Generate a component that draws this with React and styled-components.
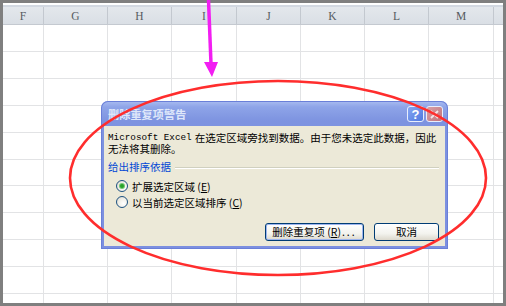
import React from "react";
import styled, { createGlobalStyle } from "styled-components";

const Global = createGlobalStyle`
  html, body { margin: 0; padding: 0; }
  body { width: 506px; height: 306px; overflow: hidden; background: #7f7f7f; font-family: "Noto Sans CJK SC", sans-serif; }
`;

const Frame = styled.div`
  position: relative;
  width: 506px;
  height: 306px;
  box-sizing: border-box;
  padding: 3px;
  background: #7f7f7f;
`;

const Sheet = styled.div`
  width: 500px;
  height: 300px;
  background: #ffffff;
  overflow: hidden;
  display: flex;
  flex-direction: column;
`;

const TopStrip = styled.div`
  height: 2px;
  background: #ffffff;
  border-bottom: 2px solid #d2d8e1;
  flex: none;
`;

const HeaderRow = styled.div`
  display: flex;
  height: 17px;
  flex: none;
  background: linear-gradient(#e3e7ec, #dadfe5);
  border-bottom: 1px solid #c4c9d0;
`;

const HeaderCell = styled.div`
  flex: none;
  width: ${(p) => p.$w}px;
  box-sizing: border-box;
  border-right: ${(p) => (p.$last ? "none" : "1px solid #c3c8cf")};
  display: flex;
  align-items: center;
  justify-content: ${(p) => (p.$start ? "flex-start" : "center")};
  padding-left: ${(p) => (p.$start ? "6px" : "0")};
  font-family: "Liberation Serif", serif;
  font-size: 11.5px;
  color: #555a60;
`;

const Row = styled.div`
  display: flex;
  height: ${(p) => p.$h}px;
  flex: none;
  box-sizing: border-box;
  border-bottom: 1px solid #e2e3e5;
`;

const Cell = styled.div`
  flex: none;
  width: ${(p) => p.$w}px;
  box-sizing: border-box;
  border-right: ${(p) => (p.$last ? "none" : "1px solid #e2e3e5")};
`;

const Dialog = styled.div`
  position: absolute;
  left: 101px;
  top: 101px;
  width: 347px;
  height: 148px;
  box-sizing: border-box;
  padding: 0 3px 3px 3px;
  border-radius: 7px 7px 0 0;
  background: linear-gradient(#a9bcf0 0px, #8ea4e8 6px, #7d93e0 20px, #7c8fe0 100%);
  display: flex;
  flex-direction: column;
  box-shadow: 0 0 0 1px #6a7fd8 inset;
`;

const TitleBar = styled.div`
  height: 25px;
  flex: none;
  display: flex;
  align-items: center;
  padding-left: 4px;
  padding-right: 2px;
  padding-top: 1px;
  box-sizing: border-box;
`;

const Title = styled.div`
  flex: 1;
  font-family: "Noto Sans CJK SC", sans-serif;
  font-weight: 700;
  font-size: 11px;
  color: #dfe7fa;
  letter-spacing: 0.2px;
`;

const CapButton = styled.div`
  width: 17px;
  height: 16px;
  box-sizing: border-box;
  margin-left: 2px;
  border-radius: 3px;
  border: 1px solid #e8eefc;
  background: ${(p) =>
    p.$close
      ? "linear-gradient(135deg, #d8a0a6, #c0737c)"
      : "linear-gradient(135deg, #86a6f2, #4f78e0)"};
  display: flex;
  align-items: center;
  justify-content: center;
  color: #ffffff;
  font-family: "Liberation Sans", sans-serif;
  font-weight: 700;
  font-size: 13px;
  line-height: 1;
`;

const Body = styled.div`
  flex: 1;
  background: #ece9d8;
  padding: 6px 6px 5px 4px;
  display: flex;
  flex-direction: column;
  font-family: "Noto Sans CJK SC", sans-serif;
  font-size: 10.5px;
  color: #000;
`;

const MessageLine = styled.div`
  height: 11px;
  line-height: 11px;
  white-space: nowrap;
  display: flex;
  align-items: center;
`;

const Latin = styled.span`
  font-family: "Liberation Mono", monospace;
  font-size: 9.3px;
  margin-right: 3px;
`;

const GroupHead = styled.div`
  margin-top: 7px;
  height: 12px;
  display: flex;
  align-items: center;
  gap: 4px;
  color: #0046d5;
  line-height: 12px;
  white-space: nowrap;
`;

const GroupLine = styled.div`
  flex: 1;
  height: 1px;
  background: #d0d0bf;
  border-bottom: 1px solid #ffffff;
  margin-top: 2px;
`;

const Options = styled.div`
  margin-top: 5px;
  padding-left: 8px;
  display: flex;
  flex-direction: column;
`;

const OptionRow = styled.div`
  height: 16px;
  display: flex;
  align-items: center;
  gap: 4px;
  white-space: nowrap;
`;

const Radio = styled.div`
  width: 12px;
  height: 12px;
  box-sizing: border-box;
  border-radius: 50%;
  border: 1px solid #1d5281;
  background: radial-gradient(circle at 65% 65%, #ffffff 0%, #f0efe8 50%, #d6d3c6 100%);
  display: flex;
  align-items: center;
  justify-content: center;
`;

const Dot = styled.div`
  width: 4px;
  height: 4px;
  border-radius: 50%;
  background: #2aa12a;
  box-shadow: 0 0 0 1px #72c872;
`;

const Buttons = styled.div`
  margin-top: 13px;
  display: flex;
  justify-content: flex-end;
  gap: 10px;
`;

const Button = styled.div`
  width: ${(p) => p.$w}px;
  height: 18px;
  box-sizing: border-box;
  border: 1px solid #003c74;
  border-radius: 3px;
  background: linear-gradient(#ffffff, #f3f3ee 60%, #dcd8cc);
  box-shadow: ${(p) => (p.$default ? "inset 0 0 0 1px #9db5ef" : "none")};
  display: flex;
  align-items: center;
  justify-content: center;
  white-space: nowrap;
  line-height: 1;
`;

const Dots = styled.span`
  letter-spacing: 2px;
  margin-left: 1px;
`;

const Overlay = styled.svg`
  position: absolute;
  left: 0;
  top: 0;
  pointer-events: none;
`;

const cols = [
  { l: "F", w: 41, start: true },
  { l: "G", w: 64 },
  { l: "H", w: 64 },
  { l: "I", w: 65 },
  { l: "J", w: 64 },
  { l: "K", w: 64 },
  { l: "L", w: 64 },
  { l: "M", w: 65 },
  { l: "", w: 9, last: true },
];

const rows = [27, 27, 27, 27, 27, 26, 27, 27, 27, 27, 27];

export default function App() {
  return (
    <>
      <Global />
      <Frame>
        <Sheet>
          <TopStrip />
          <HeaderRow>
            {cols.map((c, i) => (
              <HeaderCell key={i} $w={c.w} $last={c.last}>
                {c.l}
              </HeaderCell>
            ))}
          </HeaderRow>
          {rows.map((h, r) => (
            <Row key={r} $h={h}>
              {cols.map((c, i) => (
                <Cell key={i} $w={c.w} $last={c.last} />
              ))}
            </Row>
          ))}
        </Sheet>

        <Dialog>
          <TitleBar>
            <Title>删除重复项警告</Title>
            <CapButton>?</CapButton>
            <CapButton $close>
              <svg width="9" height="9" viewBox="0 0 9 9">
                <path d="M1 1L8 8M8 1L1 8" stroke="#f4e6e8" strokeWidth="1.8" />
              </svg>
            </CapButton>
          </TitleBar>
          <Body>
            <MessageLine>
              <Latin>Microsoft Excel</Latin>在选定区域旁找到数据。由于您未选定此数据，因此
            </MessageLine>
            <MessageLine>无法将其删除。</MessageLine>
            <GroupHead>
              给出排序依据
              <GroupLine />
            </GroupHead>
            <Options>
              <OptionRow>
                <Radio>
                  <Dot />
                </Radio>
                <span>
                  扩展选定区域 (<u>E</u>)
                </span>
              </OptionRow>
              <OptionRow>
                <Radio />
                <span>
                  以当前选定区域排序 (<u>C</u>)
                </span>
              </OptionRow>
            </Options>
            <Buttons>
              <Button $w={99} $default>
                删除重复项 (<u>R</u>)<Dots>...</Dots>
              </Button>
              <Button $w={65}>取消</Button>
            </Buttons>
          </Body>
        </Dialog>

        <Overlay width="506" height="306" viewBox="0 0 506 306">
          <ellipse cx="278" cy="178" rx="208" ry="97" fill="none" stroke="#ff2d2d" strokeWidth="2.6" />
          <path d="M208.5 0 L211 64" stroke="#f21ef2" strokeWidth="3.5" />
          <polygon points="204,62 218,62 212,77" fill="#f21ef2" />
        </Overlay>
      </Frame>
    </>
  );
}
